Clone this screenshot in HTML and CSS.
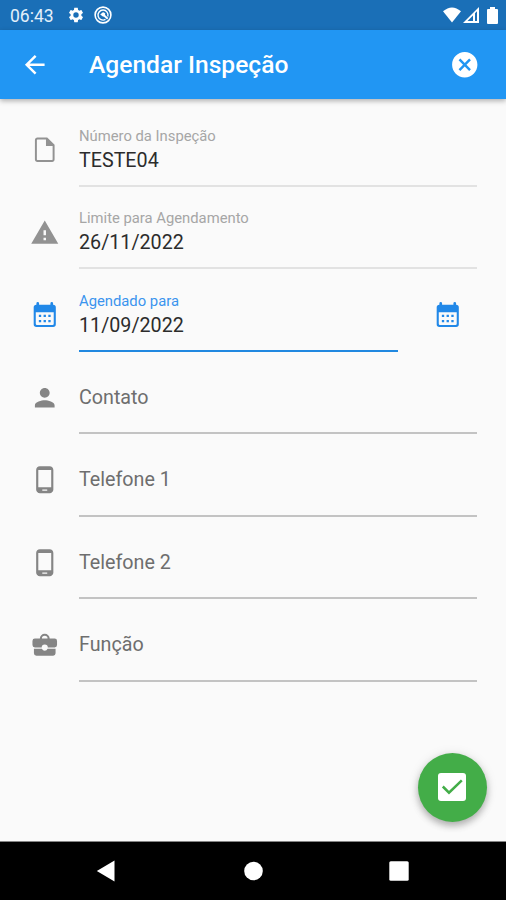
FILE: index.html
```html
<!DOCTYPE html>
<html lang="pt-BR">
<head>
<meta charset="utf-8">
<title>Agendar Inspeção</title>
<link rel="stylesheet" href="styles.css">
</head>
<body>
<svg class="defs" aria-hidden="true">
  <symbol id="calendar" viewBox="0 0 24 24"><path fill-rule="evenodd" d="M5.200 2.800a1 1 0 0 1 2.200 0V3.800h9.200V2.800a1 1 0 0 1 2.200 0V3.800A2.200 2.200 0 0 1 21 6V19.800a2.200 2.200 0 0 1-2.200 2.200H5.200A2.200 2.200 0 0 1 3 19.800V6A2.200 2.200 0 0 1 5.200 3.800zM4.700 10v9.300a1 1 0 0 0 1 1h12.600a1 1 0 0 0 1-1V10z"/><path d="M7.200 12h1.900v1.900H7.200zm3.850 0h1.900v1.900h-1.900zm3.850 0h1.900v1.900h-1.900zm-7.700 4.200h1.900v1.900H7.200zm3.850 0h1.900v1.900h-1.900zm3.850 0h1.900v1.900h-1.900z"/></symbol>
  <symbol id="phone" viewBox="0 0 24 24"><path d="M16 1H8C6.340 1 5 2.340 5 4v16c0 1.660 1.340 3 3 3h8c1.660 0 3-1.340 3-3V4c0-1.660-1.340-3-3-3zm-2 20h-4v-1h4v1zm3.250-3H6.750V4h10.500v14z"/></symbol>
</svg>
<div class="screen">
  <div class="status">
    <span class="clock">06:43</span>
    <svg class="gear" viewBox="0 0 24 24"><path d="M19.140 12.940c.04-.3.06-.61.06-.94 0-.32-.02-.64-.07-.94l2.030-1.580c.18-.14.23-.41.12-.61l-1.920-3.320c-.12-.22-.37-.29-.59-.22l-2.390.96c-.5-.38-1.030-.7-1.620-.94l-.36-2.540c-.04-.24-.24-.41-.48-.41h-3.840c-.24 0-.43.17-.47.41l-.36 2.540c-.59.24-1.130.57-1.620.94l-2.390-.96c-.22-.08-.47 0-.59.22L2.740 8.870c-.12.21-.08.47.12.61l2.030 1.580c-.05.3-.09.63-.09.94s.02.64.07.94l-2.030 1.580c-.18.14-.23.41-.12.61l1.920 3.320c.12.22.37.29.59.22l2.390-.96c.5.38 1.030.7 1.620.94l.36 2.540c.05.24.24.41.48.41h3.840c.24 0 .44-.17.47-.41l.36-2.540c.59-.24 1.130-.56 1.620-.94l2.390.96c.22.08.47 0 .59-.22l1.920-3.320c.12-.22.07-.47-.12-.61l-2.010-1.580zM12 15.600A3.600 3.600 0 1 1 12 8.400a3.600 3.600 0 0 1 0 7.200z"/></svg>
    <svg class="ring" viewBox="0 0 18 18"><g fill="none" stroke="#fff"><circle cx="9" cy="9" r="7.900" stroke-width="1.600"/><path d="M11.500 13.400A5 5 0 1 1 13.800 10.500" stroke-width="1.400"/><path d="M8.500 8l5.200 4.800" stroke-width="1.900"/></g><path d="M6.200 8.600L8.900 6.200a2.200 2.200 0 0 1 2 3.200l-1.700 1.400z"/></svg>
    <span class="spacer"></span>
    <svg class="wifi" viewBox="0 0 18 16"><path d="M9 15.500L0 4.300Q9-3.300 18 4.300z"/></svg>
    <svg class="signal" viewBox="0 0 16 16"><path fill-rule="evenodd" d="M0 16L16 0v16zM10 8.500L4.500 14H10zM12 6.300V14h2V4.300z"/></svg>
    <svg class="battery" viewBox="0 0 11 17"><path d="M3 0h5v2h2q1 0 1 1v13q0 1-1 1H1q-1 0-1-1V3q0-1 1-1h2z"/></svg>
  </div>
  <header class="appbar">
    <svg class="icon" viewBox="0 0 24 24"><path d="M20 11H7.830l5.590-5.590L12 4l-8 8 8 8 1.410-1.410L7.830 13H20v-2z"/></svg>
    <h1>Agendar Inspeção</h1>
    <svg class="icon close" viewBox="0 0 24 24"><path d="M12 1.700C6.300 1.700 1.700 6.300 1.700 12S6.300 22.300 12 22.300 22.300 17.700 22.300 12 17.700 1.700 12 1.700zm5 13.890L15.590 17 12 13.410 8.410 17 7 15.590 10.590 12 7 8.410 8.410 7 12 10.590 15.590 7 17 8.410 13.410 12 17 15.590z"/></svg>
  </header>
  <main class="form">
    <div class="row disabled">
      <svg class="icon" viewBox="0 0 24 24"><path d="M14 2H6c-1.100 0-1.990.9-1.990 2L4 20c0 1.100.89 2 1.990 2H18c1.100 0 2-.9 2-2V8l-6-6zM6 20.400a.4.400 0 0 1-.4-.4V4a.4.400 0 0 1 .4-.4h7V9h5.400v11a.4.400 0 0 1-.4.400z"/></svg>
      <div class="field"><span class="label">Número da Inspeção</span><span class="value">TESTE04</span></div>
    </div>
    <div class="row disabled">
      <svg class="icon" viewBox="0 0 24 24"><path d="M1 21h22L12 2 1 21zm12-3h-2v-2h2v2zm0-4h-2v-4h2v4z"/></svg>
      <div class="field"><span class="label">Limite para Agendamento</span><span class="value">26/11/2022</span></div>
    </div>
    <div class="row active">
      <svg class="icon"><use href="#calendar"/></svg>
      <div class="field"><span class="label">Agendado para</span><span class="value">11/09/2022</span></div>
      <svg class="icon pick"><use href="#calendar"/></svg>
    </div>
    <div class="row">
      <svg class="icon" viewBox="0 0 24 24"><path d="M12 12c2.210 0 4-1.790 4-4s-1.790-4-4-4-4 1.790-4 4 1.790 4 4 4zm0 2c-2.670 0-8 1.340-8 4v2h16v-2c0-2.660-5.330-4-8-4z"/></svg>
      <div class="field"><span class="hint">Contato</span></div>
    </div>
    <div class="row">
      <svg class="icon"><use href="#phone"/></svg>
      <div class="field"><span class="hint">Telefone 1</span></div>
    </div>
    <div class="row">
      <svg class="icon"><use href="#phone"/></svg>
      <div class="field"><span class="hint">Telefone 2</span></div>
    </div>
    <div class="row">
      <svg class="icon" viewBox="0 0 24 24"><path fill-rule="evenodd" d="M8 7a4 4 0 0 1 8 0h4a2 2 0 0 1 2 2v3.300a2 2 0 0 1-2 2h-5.500a2.500 2.500 0 0 0-5 0H4a2 2 0 0 1-2-2V9a2 2 0 0 1 2-2zM9.700 7h4.600a2.300 2.300 0 0 0-4.600 0zM3.200 15.300h6.500a2.500 2.500 0 0 0 4.600 0h6.500V19a2 2 0 0 1-2 2H5.200a2 2 0 0 1-2-2z"/></svg>
      <div class="field"><span class="hint">Função</span></div>
    </div>
  </main>
  <button class="fab" aria-label="Confirmar"><svg viewBox="0 0 28 28"><rect width="28" height="28" rx="3"/><path class="tick" d="M4.800 13.500l6.200 6.200L23.800 7.300"/></svg></button>
  <nav class="navbar">
    <svg viewBox="0 0 20 22"><path d="M18.500 .5v21L.8 11z"/></svg>
    <svg viewBox="0 0 20 22"><circle cx="10.500" cy="11" r="9.300"/></svg>
    <svg viewBox="0 0 20 22"><rect x=".3" y="1.300" width="19.400" height="19.400" rx="1.500"/></svg>
  </nav>
</div>
</body>
</html>
```

FILE: styles.css
```css
* { box-sizing: border-box; }
body { margin: 0; font-family: Roboto, sans-serif; background: #fafafa; }
svg { display: block; flex: none; fill: currentColor; }
.defs { display: none; }
.screen { position: relative; width: 506px; height: 900px; display: flex; flex-direction: column; overflow: hidden; background: #fafafa; }
.status { height: 30px; display: flex; align-items: center; padding: 0 8px 0 10px; background: #1a6fb7; color: #fff; }
.clock { width: 57px; font-size: 17.500px; line-height: 30px; padding-top: 1px; color: #e3effa; }
.gear { width: 18px; height: 18px; }
.ring { width: 18px; height: 18px; margin-left: 9px; }
.spacer { flex: 1; }
.wifi { width: 18px; height: 16px; }
.signal { width: 16px; height: 16px; margin-left: 2px; }
.battery { width: 11px; height: 17px; margin-left: 8px; }
.icon { width: 29.500px; height: 29.500px; }
.appbar { height: 69px; display: flex; align-items: center; padding: 0 27px 0 20px; background: #2196f3; color: #fff; box-shadow: 0 2px 5px rgba(0,0,0,.3); }
.appbar h1 { flex: 1; margin: 0 0 0 39.500px; font-size: 24.600px; line-height: 30px; font-weight: 500; padding-top: 1px; }
.form { flex: 1; padding: 5px 29px 0 30px; }
.row { height: 82.500px; display: flex; color: #858585; }
.row > .icon { margin-top: 31px; }
.field { flex: 1; height: 82.500px; margin-left: 19.500px; padding-top: 22.500px; border-bottom: 2px solid #c3c3c3; display: flex; flex-direction: column; }
.disabled .field { border-color: #e2e2e2; }
.disabled { color: #929292; }
.label { font-size: 14.800px; line-height: 19px; color: #a6a6a6; }
.value { font-size: 19.700px; line-height: 28px; margin-top: 1px; color: #2c2c2c; }
.hint { font-size: 19.700px; line-height: 28px; margin-top: 9.500px; color: #6e6e6e; }
.active { color: #2188e8; }
.active .label { color: #3a94ee; }
.active .field { border-bottom: 2px solid #2188e0; }
.active .pick { margin-left: 34.500px; margin-right: 15px; }
.fab { position: absolute; right: 19px; top: 753px; width: 69px; height: 69px; border: 0; border-radius: 50%; padding: 0 1px 2px 0; display: grid; place-items: center; background: #43ad48; color: #fff; box-shadow: 0 4px 7px rgba(0,0,0,.26), 0 1px 12px rgba(0,0,0,.1); }
.fab svg { width: 28px; height: 28px; }
.tick { fill: none; stroke: #43ad48; stroke-width: 2.500; }
.navbar { height: 59px; display: flex; align-items: center; justify-content: space-between; padding: 0 97px 0 96px; background: #000; border-top: 1px solid #858585; color: #fff; }
.navbar svg { width: 20px; height: 22px; }
```
